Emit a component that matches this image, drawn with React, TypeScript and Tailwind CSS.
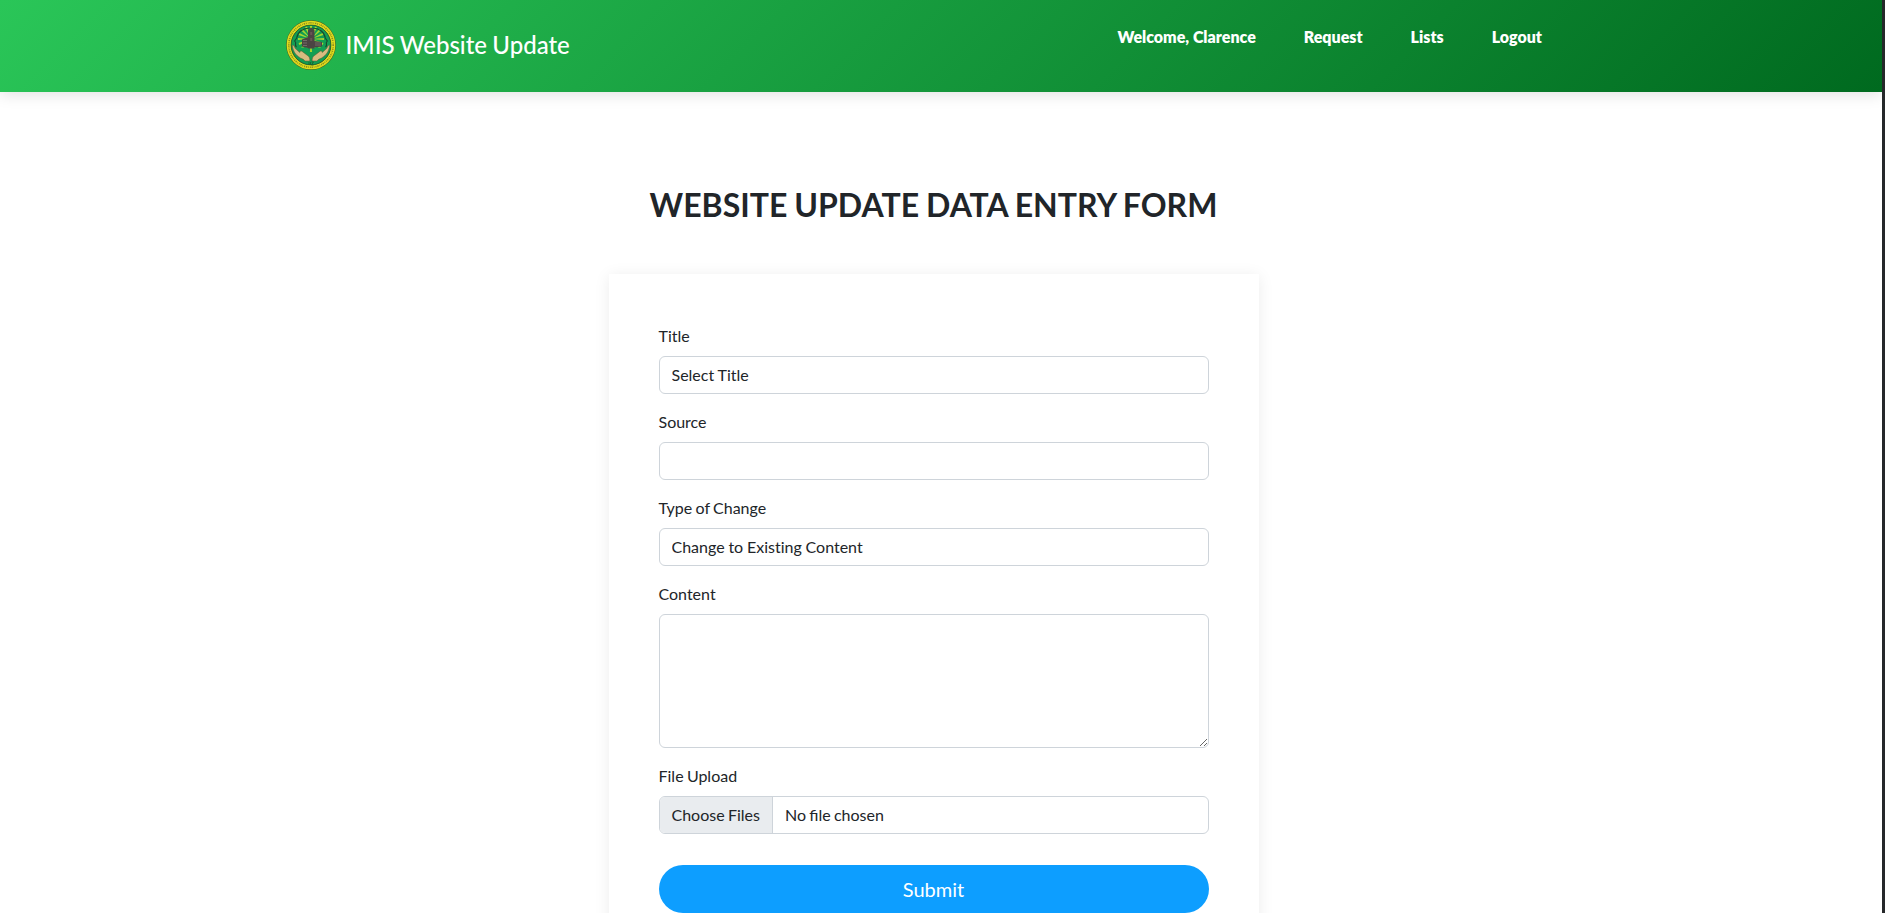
import type { ReactNode } from "react";

const control =
  "block h-[38px] w-full appearance-none rounded-md border border-[#ced4da] bg-white px-3 text-base text-[#212529] outline-none [word-spacing:-0.02em]";

function Seal() {
  const rays = Array.from({ length: 16 }, (_, i) => i * 22.5);
  return (
    <svg viewBox="0 0 50 50" className="h-[50px] w-[50px]">
      <circle cx="25" cy="25" r="24.8" fill="#4d5a1c" />
      <circle cx="25" cy="25" r="22.2" fill="none" stroke="#e0dc1c" strokeWidth="4.2" />
      <circle cx="25" cy="25" r="22.2" fill="none" stroke="#8b8d20" strokeWidth="1.6" strokeDasharray="1 1.1 .7 .9 1.3 .8" />
      <circle cx="25" cy="25" r="19.9" fill="#129e53" stroke="#29552a" strokeWidth=".7" />
      {rays.map((a) => (
        <path key={a} d="M25 19l-1.1-13h2.200z" fill="#a8d52e" transform={`rotate(${a} 25 19)`} />
      ))}
      <path d="M10.5 27c-1.5-1-1.200-2.500-.8-4.500l-1-1.500 2-3c1-6 6-10 13-10M39.500 27c1.500-1 1.200-2.500.8-4.500l1-1.500-2-3c-1-6-6-10-13-10" fill="none" stroke="#17492f" strokeWidth="1.1" />
      <path d="M11 27.500h11v8H15zM28 27.500h11l-4 8h-7z" fill="#129e53" />
      <path d="M22 10l3-2.500L28.500 10v18.500H22zM16 19.500l6-2.500v11l-6-1.500zM28 21l8 1v4.500l-8 1z" fill="#4b4443" />
      <path d="M17 20.500h4m-4 2.500h4m-4 2.500h4m8-2.500h6m-6 2h6" stroke="#7d7671" strokeWidth=".8" />
      <path d="M24.200 12h2v3h-2zM24.200 18h2v3h-2z" fill="#6a5553" />
      <path d="M6.300 25.500c1.200-.7 2 .8 3 3l4.500 4c.2-1.800 1.500-2 2.700-.8l5 3.800c2 1.300 2.500 3 2.300 5.500h-5c-.5-2-4-2.200-6.500-4.500C8 33.500 7 29 6.300 25.500zM43.700 25.500c-1.200-.7-2 .8-3 3l-4.500 4c-.2-1.800-1.500-2-2.700-.8l-5 3.800c-2 1.300-2.500 3-2.300 5.500h5c.5-2 4-2.200 6.500-4.500 4.300-3 5.300-7.500 6-11z" fill="#d8bb80" stroke="#65522d" strokeWidth=".5" />
      <path d="M23 42v3m1.500-3v3m1-3h2l-2 3h2" fill="none" stroke="#1c5a2c" strokeWidth=".8" />
    </svg>
  );
}

function Field({ label, children }: { label: string; children: ReactNode }) {
  return (
    <label className="mb-4 block">
      <span className="mb-2 block leading-6">{label}</span>
      {children}
    </label>
  );
}

export default function App() {
  return (
    <div className="flex h-[913px] overflow-hidden bg-white font-['Lato',sans-serif] text-base text-[#212529] [font-variant-ligatures:none] [word-spacing:-0.05em]">
      <div className="flex min-w-0 flex-1 flex-col">
        <header className="flex h-[92px] shrink-0 justify-between bg-[linear-gradient(135deg,#2ac658_0%,#006a1f_100%)] pr-[340px] pl-[286px] text-white shadow-[0_2px_15px_rgba(0,0,0,0.13)]">
          <a className="flex h-[90px] items-center gap-[9.5px] text-2xl font-medium [word-spacing:-0.03em]">
            <Seal />
            <span>IMIS Website Update</span>
          </a>
          <nav className="flex gap-12 pt-[25px] leading-6 font-extrabold [word-spacing:0]">
            <a>Welcome, Clarence</a>
            <a>Request</a>
            <a>Lists</a>
            <a>Logout</a>
          </nav>
        </header>
        <main className="flex flex-1 flex-col items-center pr-[15px]">
          <h1 className="mt-[93px] mb-[49px] text-[32px] leading-[40px] font-bold whitespace-nowrap">WEBSITE UPDATE DATA ENTRY FORM</h1>
          <form className="h-[700px] w-[650px] shrink-0 bg-white p-[50px] shadow-[0_2px_15px_rgba(0,0,0,0.08)]">
            <Field label="Title">
              <select className={control}>
                <option>Select Title</option>
              </select>
            </Field>
            <Field label="Source">
              <input type="text" className={control} />
            </Field>
            <Field label="Type of Change">
              <select className={control}>
                <option>Change to Existing Content</option>
              </select>
            </Field>
            <Field label="Content">
              <textarea className="block h-[134px] w-full resize rounded-md border border-[#ced4da] bg-white px-3 py-1.5 outline-none" />
            </Field>
            <Field label="File Upload">
              <input
                type="file"
                multiple
                className="block h-[38px] w-full overflow-hidden rounded-md border border-[#ced4da] bg-white leading-6 [font-variant-ligatures:normal] [word-spacing:-0.05em] file:mr-3 file:h-9 file:border-r file:border-solid file:border-[#ced4da] file:bg-[#e9ecef] file:px-3 file:text-[#212529] file:[word-spacing:-0.05em]"
              />
            </Field>
            <button type="button" className="mt-[31px] block h-12 w-full rounded-full bg-[#0d9eff] text-xl text-white">
              Submit
            </button>
          </form>
        </main>
      </div>
      <div className="w-[3px] bg-[#25282a]" />
    </div>
  );
}
